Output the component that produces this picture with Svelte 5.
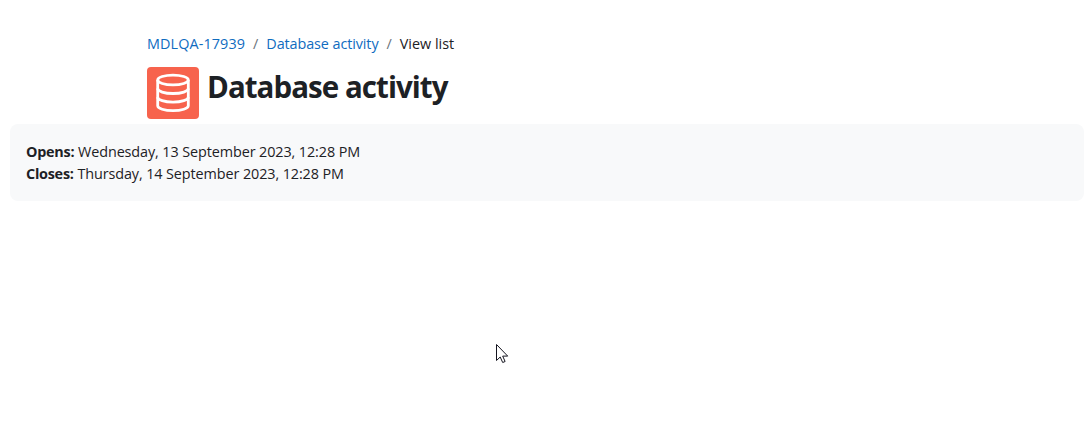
<script>
    const breadcrumbs = [
        { name: "MDLQA-17939", href: "#course", kind: "course" },
        { name: "Database activity", href: "#activity", kind: "activity" },
        { name: "View list", kind: "current" },
    ];

    const dates = [
        { label: "Opens:", value: "Wednesday, 13 September 2023, 12:28 PM" },
        { label: "Closes:", value: "Thursday, 14 September 2023, 12:28 PM" },
    ];
</script>

<main class="page">
    <header class="page-header">
        <nav aria-label="Breadcrumb">
            <ol class="breadcrumb">
                {#each breadcrumbs as item}
                    <li>
                        {#if item.href}
                            <a class={item.kind} href={item.href}>{item.name}</a>
                        {:else}
                            <span>{item.name}</span>
                        {/if}
                    </li>
                {/each}
            </ol>
        </nav>
        <div class="title-row">
            <div class="activity-icon">
                <svg viewBox="0 0 52 52" width="52" height="52" aria-hidden="true">
                    <ellipse cx="26" cy="13" rx="15.3" ry="4.9" />
                    <path d="M10.7 13v25.8c0 2.7 6.8 4.9 15.3 4.9s15.3-2.2 15.3-4.9V13" />
                    <path d="M10.7 21.6c0 2.7 6.8 4.9 15.3 4.9s15.3-2.2 15.3-4.9" />
                    <path d="M10.7 30.2c0 2.7 6.8 4.9 15.3 4.9s15.3-2.2 15.3-4.9" />
                </svg>
            </div>
            <h1>Database activity</h1>
        </div>
    </header>

    <section class="activity-dates">
        {#each dates as date}
            <div><strong>{date.label}</strong> <span>{date.value}</span></div>
        {/each}
    </section>

    <svg class="cursor" viewBox="0 0 13 20" width="13" height="20" aria-hidden="true">
        <path d="M.5.5v16l3.7-3.5 2.5 5.5 2.4-1-2.4-5.4h5z" />
    </svg>
</main>

<style>
    :global(body) {
        background-color: #fff;
    }

    .page {
        position: relative;
        box-sizing: border-box;
        height: 429px;
        padding: 33px 6px 0 10px;
        overflow: hidden;
        color: #1d2125;
        font-family: "Open Sans", "Noto Sans", sans-serif;
        font-size: 14.4px;
        line-height: 22px;
    }

    .page-header {
        padding-left: 137px;
    }

    .breadcrumb {
        display: flex;
        margin: 0;
        padding: 0;
        list-style: none;
        & li + li::before {
            content: "/";
            padding: 0 8px;
            color: #6a737b;
        }
        & a {
            color: #0f6cbf;
            text-decoration: none;
        }
        & .course {
            letter-spacing: 0.1px;
        }
        & .activity {
            letter-spacing: -0.1px;
        }
    }

    .title-row {
        display: flex;
        align-items: flex-start;
        gap: 8px;
        margin-top: 12px;
        & h1 {
            margin: 1px 0 0;
            font-size: 29.5px;
            font-weight: 700;
            line-height: 38px;
            letter-spacing: -0.95px;
        }
    }

    .activity-icon {
        width: 52px;
        height: 52px;
        border-radius: 4px;
        background-color: #f7634d;
        & svg {
            display: block;
            fill: none;
            stroke: #fff;
            stroke-width: 2.8;
        }
    }

    .activity-dates {
        margin-top: 5px;
        padding: 17px 16px 16px;
        border-radius: 8px;
        background-color: #f8f9fa;
        & strong {
            letter-spacing: -0.25px;
        }
        & span {
            letter-spacing: -0.1px;
        }
    }

    .cursor {
        position: absolute;
        left: 496px;
        top: 344px;
        fill: #fff;
        stroke: #14141f;
    }
</style>
